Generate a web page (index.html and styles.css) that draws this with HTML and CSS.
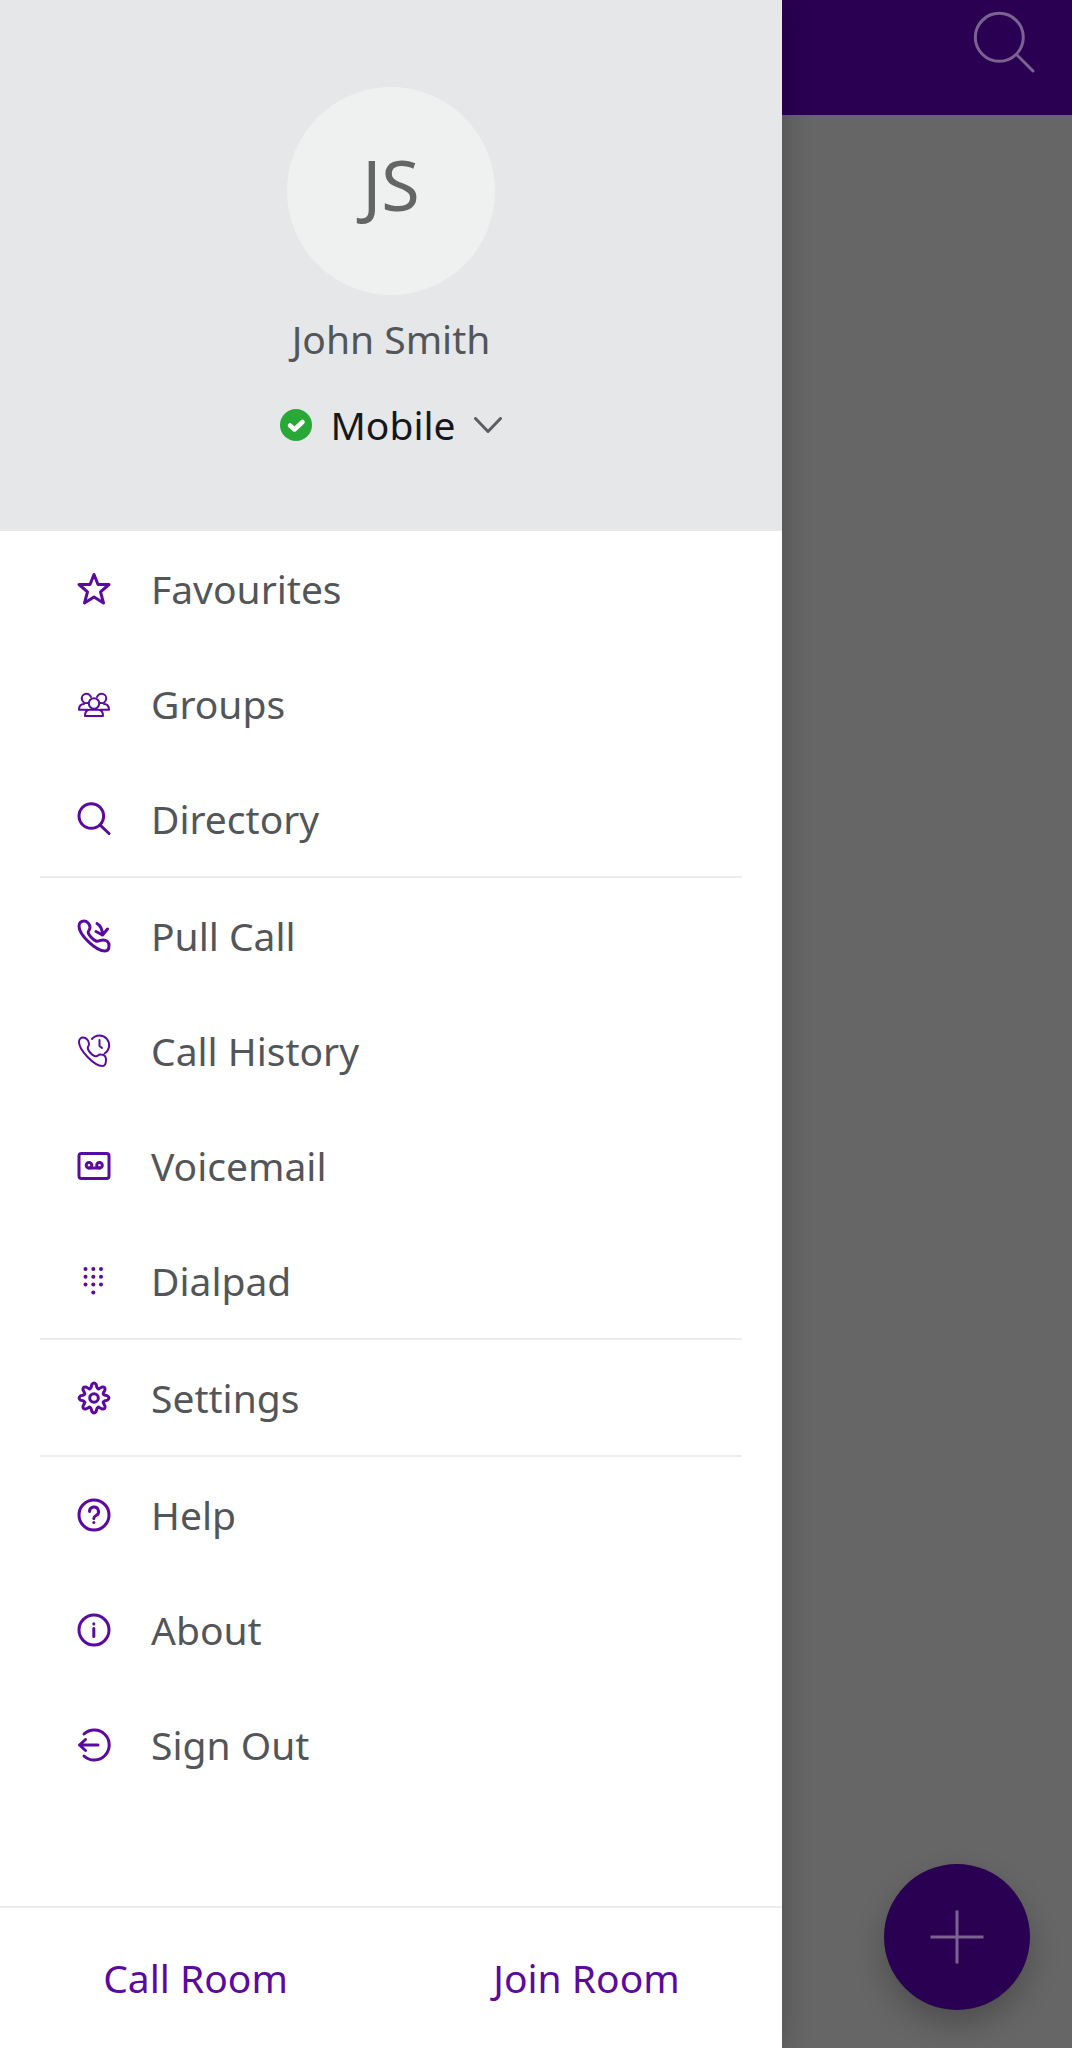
FILE: index.html
```html
<!DOCTYPE html>
<html lang="en-GB">
<head>
<meta charset="utf-8">
<meta name="viewport" content="width=device-width, initial-scale=1">
<title>Menu</title>
<link rel="stylesheet" href="styles.css">
</head>
<body>
<div class="app">
  <aside class="drawer">
    <header class="profile">
      <div class="avatar">JS</div>
      <div class="name">John Smith</div>
      <button class="presence" type="button">
        <svg class="icon" viewBox="0 0 32 32" aria-hidden="true"><circle cx="16" cy="16" r="16" fill="#28a836"/><path d="M10 16.500l4.500 4 8-7.500" fill="none" stroke="#fff" stroke-width="4.500" stroke-linecap="round" stroke-linejoin="round"/></svg>
        <span>Mobile</span>
        <svg class="chevron" viewBox="0 0 28 16" aria-hidden="true"><path d="M1.500 1.500L14 14.500 26.500 1.500"/></svg>
      </button>
    </header>
    <nav class="menu">
      <ul class="group">
        <li><a class="item" href="#favourites"><svg class="icon" viewBox="0 0 32 32"><path d="M16 1.500l4 10h11l-8.500 7.300L25.500 30 16 24l-9.500 6 3-11.200L1 11.500h11z"/></svg>Favourites</a></li>
        <li><a class="item" href="#groups"><svg class="icon thin" viewBox="0 0 32 32"><path d="M9.500 15A4.700 4.700 0 1 1 13 9M22.500 15A4.700 4.700 0 1 0 19 9"/><circle cx="16" cy="15.500" r="5.200"/><path d="M6 16C3 16 1 18 1 21.800h8.500M26 16c3 0 5 2 5 5.800h-8.500M12 21.800c-3 0-5 2-5 6.200h18c0-4.200-2-6.200-5-6.200z"/></svg>Groups</a></li>
        <li><a class="item" href="#directory"><svg class="icon" viewBox="0 0 32 32"><circle cx="13.300" cy="13" r="12.300"/><path d="M22 22l9 8.500"/></svg>Directory</a></li>
      </ul>
      <ul class="group">
        <li><a class="item" href="#pull-call"><svg class="icon" viewBox="0 0 32 32"><path d="M1 6C1 3 3 1 6 1s6 3 6 6.500c0 2.500-2 3-1.800 5C10.500 15 15 20 18 21c2.500 1 4-1 7-1 3.500 0 6 2 6 5.500s-1 5.500-4 5.500C18 31 1 15 1 6z"/><path d="M19 3.500c4 2.500 5.500 6.500 5.500 11.500M18 11.500l6.500 3.500 5-6"/></svg>Pull Call</a></li>
        <li><a class="item" href="#call-history"><svg class="icon thin" viewBox="0 0 32 32"><path d="M1 7c0-3 2-4.500 4-4.500 3.500 0 6 3.500 6 6.500 0 2-1.500 2.500-1.200 4.500.4 2.500 4.400 7 7.200 7.800 2 .5 3-1.800 5.500-1.800 3 0 5.500 1.500 5.500 5 0 3-.5 6.500-3.500 6.500C16 31 1 15 1 7z"/><path d="M14 4A9.700 9.700 0 1 1 26.500 18.500M21.500 5v6l2.500 2"/></svg>Call History</a></li>
        <li><a class="item" href="#voicemail"><svg class="icon" viewBox="0 0 32 32"><rect x="1" y="3.500" width="30" height="25" rx="2.500"/><circle cx="11" cy="15.300" r="2.800"/><circle cx="21.500" cy="15.300" r="2.800"/><path d="M11 18.100h10.500"/></svg>Voicemail</a></li>
        <li><a class="item" href="#dialpad"><svg class="icon dots" viewBox="0 0 32 32"><circle cx="7.500" cy="4" r="2"/><circle cx="15.300" cy="4" r="2"/><circle cx="23" cy="4" r="2"/><circle cx="7.500" cy="11.700" r="2"/><circle cx="15.300" cy="11.700" r="2"/><circle cx="23" cy="11.700" r="2"/><circle cx="7.500" cy="19.500" r="2"/><circle cx="15.300" cy="19.500" r="2"/><circle cx="23" cy="19.500" r="2"/><circle cx="15.300" cy="27.500" r="2"/></svg>Dialpad</a></li>
      </ul>
      <ul class="group">
        <li><a class="item" href="#settings"><svg class="icon" viewBox="-16 -16 32 32"><path d="M-2.100-13.500Q0-16.300 2.100-13.500L3-10.400Q4.200-8.400 5.200-9.500L8.100-11Q11.500-11.500 11-8.100L9.500-5.200Q8.400-4.200 10.400-3L13.500-2.100Q16.300 0 13.500 2.100L10.400 3Q8.400 4.200 9.500 5.200L11 8.100Q11.500 11.500 8.100 11L5.200 9.500Q4.200 8.400 3 10.400L2.100 13.500Q0 16.300-2.100 13.500L-3 10.400Q-4.200 8.400-5.200 9.500L-8.100 11Q-11.500 11.500-11 8.100L-9.500 5.200Q-8.400 4.200-10.400 3L-13.500 2.100Q-16.300 0-13.500-2.100L-10.400-3Q-8.400-4.200-9.500-5.200L-11-8.100Q-11.500-11.500-8.100-11L-5.200-9.500Q-4.200-8.400-3-10.400z"/><circle r="4.300"/></svg>Settings</a></li>
      </ul>
      <ul class="group">
        <li><a class="item" href="#help"><svg class="icon" viewBox="0 0 32 32"><circle cx="16" cy="16" r="15"/><path d="M11.500 12.500a4.500 4.500 0 1 1 6.500 4c-1.500.8-2.200 1.500-2.200 3"/><path d="M15.800 23.500v.1"/></svg>Help</a></li>
        <li><a class="item" href="#about"><svg class="icon" viewBox="0 0 32 32"><circle cx="16" cy="16" r="15"/><path d="M15.800 14.500V22.500M15.800 9.800v.1"/></svg>About</a></li>
        <li><a class="item" href="#sign-out"><svg class="icon" viewBox="0 0 32 32"><path d="M6 5a15 15 0 1 1 0 22M20 16H1.500M7.500 10.500L1.500 16l6 5.500"/></svg>Sign Out</a></li>
      </ul>
    </nav>
    <footer class="rooms">
      <button class="room" type="button">Call Room</button>
      <button class="room" type="button">Join Room</button>
    </footer>
  </aside>
  <main class="page">
    <div class="topbar">
      <button class="search" type="button" aria-label="Search"><svg viewBox="0 0 64 64"><circle cx="27.300" cy="26.300" r="24"/><path d="M44.500 43.500L61 60"/></svg></button>
    </div>
    <button class="add" type="button" aria-label="Add"><svg viewBox="0 0 56 56"><path d="M28 1.500v53M1.500 28h53"/></svg></button>
  </main>
</div>
</body>
</html>
```
FILE: styles.css
```css
* {
  box-sizing: border-box;
}

body {
  margin: 0;
  font-family: "Noto Sans", sans-serif;
  font-size: 39px;
  line-height: 52px;
  color: #535659;
}

button {
  padding: 0;
  border: 0;
  background: none;
  font: inherit;
  color: inherit;
  cursor: pointer;
}

.app {
  display: flex;
  min-height: 100vh;
}

.drawer {
  flex: 1;
  display: flex;
  flex-direction: column;
  z-index: 1;
  background: #fff;
  box-shadow: 0 0 28px rgba(0, 0, 0, 0.24);
}

.profile {
  display: flex;
  flex-direction: column;
  align-items: center;
  padding: 87px 32px 80px;
  background: #e5e7e9;
}

.avatar {
  display: flex;
  align-items: center;
  justify-content: center;
  width: 208px;
  height: 208px;
  padding-bottom: 14px;
  border-radius: 50%;
  background: #eff1f1;
  color: #646665;
  font-size: 70px;
}

.name {
  margin-top: 18px;
}

.presence {
  display: flex;
  align-items: center;
  gap: 18px;
  margin-top: 34px;
  color: #15171c;
}

.chevron {
  width: 28px;
  height: 16px;
  fill: none;
  stroke: #5c5e61;
  stroke-width: 3;
  stroke-linecap: round;
}

.menu {
  flex: 1;
}

.group {
  margin: 0 40px;
  padding: 0;
  list-style: none;
}

.group + .group {
  border-top: 2px solid #ededee;
}

.item {
  display: flex;
  align-items: center;
  gap: 41px;
  height: 115px;
  padding-left: 38px;
  color: inherit;
  text-decoration: none;
}

.icon {
  flex: none;
  width: 32px;
  height: 32px;
  overflow: visible;
}

.item .icon {
  fill: none;
  stroke: #5a0a9f;
  stroke-width: 3;
  stroke-linecap: round;
  stroke-linejoin: round;
}

.item .thin {
  stroke-width: 2;
}

.item .dots {
  fill: #5a0a9f;
  stroke: none;
}

.rooms {
  display: flex;
  border-top: 2px solid #ededee;
}

.room {
  flex: 1;
  height: 140px;
  color: #5a0a9f;
}

.page {
  display: flex;
  flex-direction: column;
  justify-content: space-between;
  align-items: flex-end;
  width: 290px;
  padding-bottom: 38px;
  background: #666;
}

.topbar {
  display: flex;
  justify-content: flex-end;
  align-self: stretch;
  height: 115px;
  padding: 11px 36px 0 0;
  background: #2a0052;
}

.search {
  width: 64px;
  height: 64px;
}

.search svg,
.add svg {
  display: block;
  fill: none;
  stroke: #7c6290;
  stroke-width: 3;
  stroke-linecap: round;
}

.add {
  display: grid;
  place-items: center;
  width: 146px;
  height: 146px;
  margin-right: 42px;
  border-radius: 50%;
  background: #2a0052;
  box-shadow: 0 14px 30px rgba(0, 0, 0, 0.24);
}

.add svg {
  width: 56px;
  stroke-linecap: butt;
}
```
